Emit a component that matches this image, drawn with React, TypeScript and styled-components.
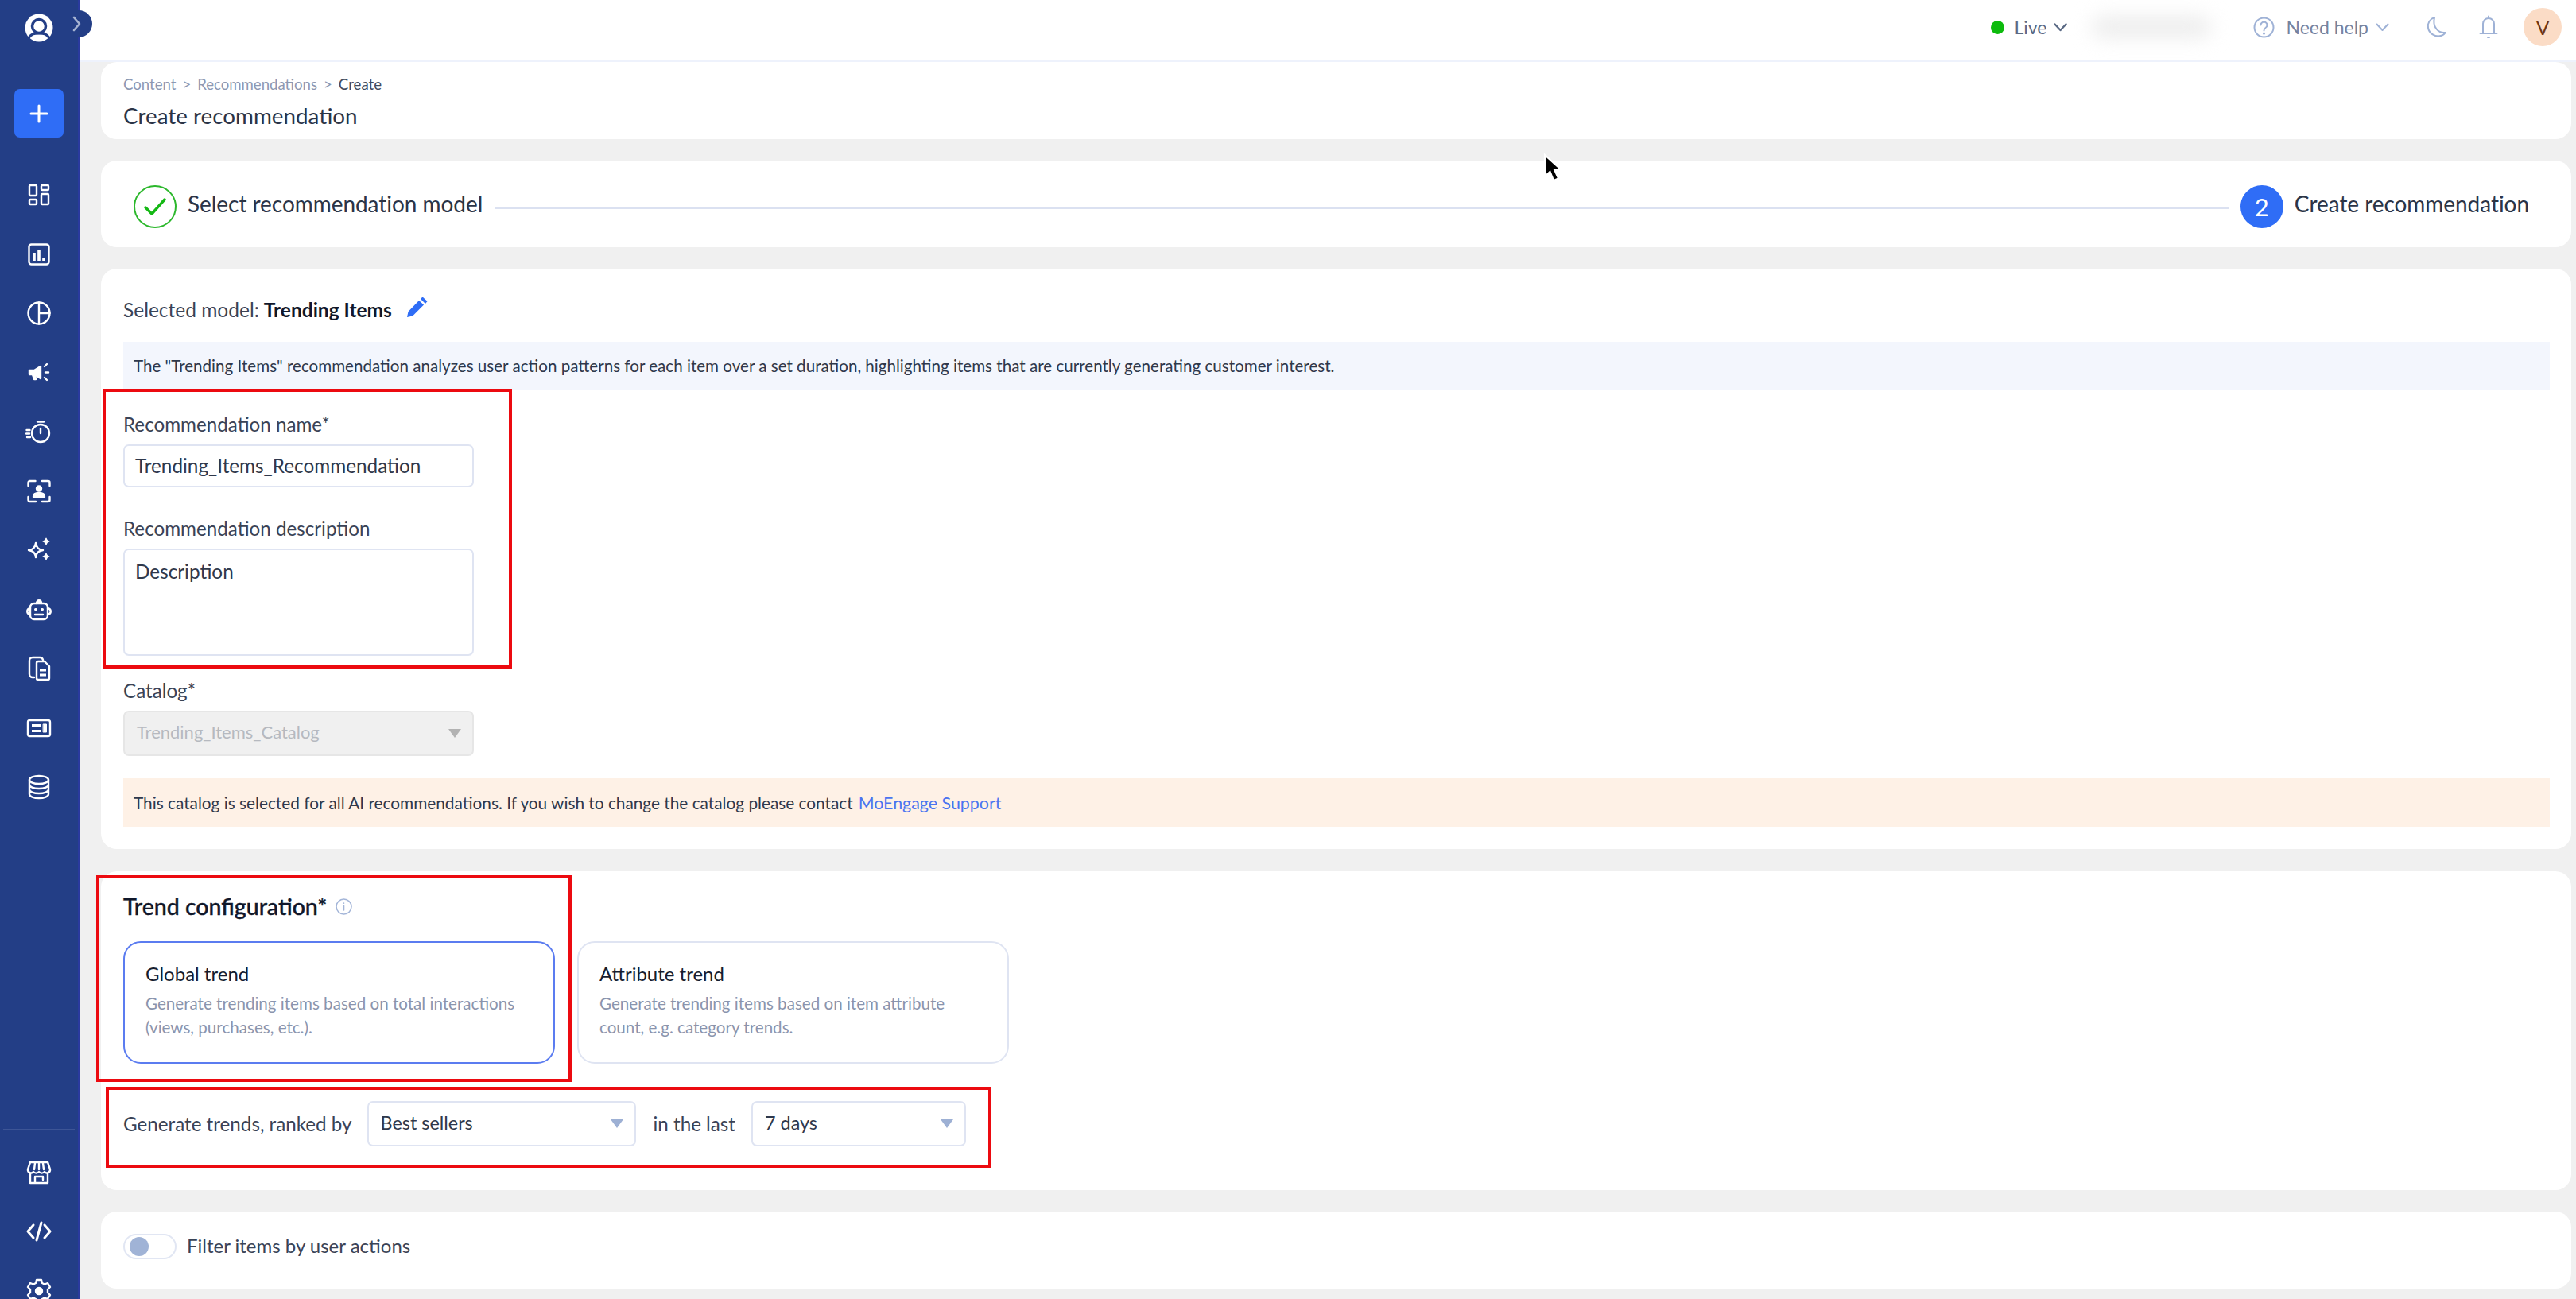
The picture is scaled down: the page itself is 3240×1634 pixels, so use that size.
import React from 'react';
import styled, { createGlobalStyle } from 'styled-components';

const GlobalStyle = createGlobalStyle`
  html, body {
    margin: 0;
    padding: 0;
    height: 100%;
    overflow: hidden;
    background: #f0f0f0;
    font-family: "Lato", "Liberation Sans", sans-serif;
    color: #2b3447;
  }
  * { box-sizing: border-box; }
`;

const Page = styled.div`
  display: flex;
  position: relative;
  width: 3240px;
  height: 1634px;
  overflow: hidden;
`;

const Sidebar = styled.aside`
  width: 100px;
  height: 100%;
  flex: none;
  background: #233e86;
  border-right: 2px solid #2a3a9e;
  display: flex;
  flex-direction: column;
  align-items: center;
  position: relative;
  padding-top: 9px;
  > svg { flex: none; }
`;

const CollapseTab = styled.div`
  position: absolute;
  left: 98px;
  top: 13px;
  width: 18px;
  height: 34px;
  background: #233e86;
  border-radius: 0 17px 17px 0;
  z-index: 5;
  display: flex;
  align-items: center;
  svg { margin-left: -8px; }
`;

const PlusButton = styled.div`
  width: 62px;
  height: 61px;
  flex: none;
  margin: 51px 0 35px;
  background: #2f6df6;
  border-radius: 7px;
  display: flex;
  align-items: center;
  justify-content: center;
`;

const NavItem = styled.div`
  height: 74.5px;
  width: 100%;
  flex: none;
  display: flex;
  align-items: center;
  justify-content: center;
`;

const SideDivider = styled.div`
  width: 90px;
  height: 2px;
  flex: none;
  background: #3d5596;
  margin: 392px 0 16px;
`;

const Main = styled.main`
  flex: 1;
  min-width: 0;
  display: flex;
  flex-direction: column;
`;

const TopBar = styled.header`
  height: 78px;
  flex: none;
  background: #fff;
  border-bottom: 2px solid #eef2fc;
  display: flex;
  align-items: center;
  justify-content: flex-end;
  padding: 0 18px 8px 0;
`;

const LiveDot = styled.span`
  width: 17px;
  height: 17px;
  border-radius: 50%;
  background: #0dbb0d;
  margin-right: 12px;
`;

const TopText = styled.span<{ $muted?: boolean }>`
  font-size: 23px;
  color: ${({ $muted }) => ($muted ? '#75839f' : '#5a6984')};
  margin: 0 9px 0 ${({ $muted }) => ($muted ? 14 : 0)}px;
`;

const BlurredAccount = styled.div`
  width: 206px;
  height: 54px;
  margin: 0 3px 0 25px;
  display: flex;
  align-items: center;
  justify-content: center;
  div {
    width: 150px;
    height: 26px;
    margin-right: 44px;
    background: #ececec;
    border-radius: 13px;
    filter: blur(12px);
  }
`;

const TopIcon = styled.span<{ $gap?: number }>`
  display: flex;
  margin-left: ${({ $gap }) => $gap ?? 0}px;
`;

const UserBadge = styled.div`
  width: 48px;
  height: 48px;
  margin-left: 32px;
  border-radius: 50%;
  background: #fbdcc6;
  color: #6e3410;
  font-size: 24px;
  display: flex;
  align-items: center;
  justify-content: center;
`;

const Content = styled.div`
  display: flex;
  flex-direction: column;
  gap: 27px;
  padding: 0 6px 0 27px;
`;

const Card = styled.section`
  background: #fff;
  border-radius: 20px;
`;

const HeaderCard = styled(Card)`
  height: 97px;
  padding: 16px 28px 0;
`;

const Breadcrumbs = styled.div`
  display: flex;
  height: 24px;
  align-items: center;
  font-size: 18.6px;
  color: #8d98b2;
  gap: 8px;
`;

const Crumb = styled.span<{ $current?: boolean }>`
  color: ${({ $current }) => ($current ? '#414a5e' : '#8d98b2')};
`;

const PageTitle = styled.h1`
  margin: 10px 0 0;
  font-size: 27.8px;
  line-height: 36px;
  font-weight: 400;
  color: #2b3447;
`;

const StepperCard = styled(Card)`
  height: 109px;
  padding: 31px 53px 0 41px;
  display: flex;
  align-items: flex-start;
`;

const StepCircle = styled.div<{ $done?: boolean }>`
  width: 54px;
  height: 54px;
  flex: none;
  border-radius: 50%;
  border: 2px solid ${({ $done }) => ($done ? '#2cb82c' : '#2f6df6')};
  background: ${({ $done }) => ($done ? '#fff' : '#2f6df6')};
  color: #fff;
  font-size: 31px;
  display: flex;
  align-items: center;
  justify-content: center;
`;

const StepLabel = styled.div`
  font-size: 28px;
  line-height: 46px;
  letter-spacing: -0.05px;
  margin-left: 14px;
  color: #2b3447;
  white-space: nowrap;
`;

const StepLine = styled.div`
  flex: 1;
  height: 2px;
  margin: 28px 15px 0;
  background: #dbe1f1;
`;

const FormCard = styled(Card)`
  height: 730px;
  padding: 26px 27px 0 28px;
`;

const SelectedRow = styled.div`
  height: 52px;
  display: flex;
  align-items: center;
  padding-bottom: 2px;
  font-size: 24.5px;
  color: #3a4356;
  b {
    font-weight: 700;
    color: #10172a;
    margin-left: 6px;
  }
  svg { margin: -6px 0 0 18px; }
`;

const Notice = styled.div<{ $warn?: boolean; $top: number }>`
  margin-top: ${({ $top }) => $top}px;
  height: ${({ $warn }) => ($warn ? 61 : 60)}px;
  padding-left: 13px;
  display: flex;
  align-items: center;
  font-size: ${({ $warn }) => ($warn ? 20.8 : 20.6)}px;
  white-space: pre;
  color: #2f384b;
  background: ${({ $warn }) => ($warn ? '#fef1e6' : '#f3f6fd')};
`;

const SupportLink = styled.a`
  color: #4a74f0;
  margin-left: 7px;
  font-size: 21.4px;
`;

const FieldLabel = styled.div<{ $top: number }>`
  margin-top: ${({ $top }) => $top}px;
  height: 30px;
  line-height: 30px;
  font-size: 24.2px;
  color: #3a4356;
`;

const TextBox = styled.div<{ $tall?: boolean }>`
  width: 441px;
  height: ${({ $tall }) => ($tall ? 135 : 54)}px;
  margin-top: 10px;
  border: 2px solid #dfe4f2;
  border-radius: 7px;
  padding: ${({ $tall }) => ($tall ? '12px 13px' : '0 13px')};
  display: flex;
  align-items: ${({ $tall }) => ($tall ? 'flex-start' : 'center')};
  font-size: 24.3px;
  line-height: 30px;
  color: #2f384b;
`;

const SelectBox = styled.div<{ $w: number; $disabled?: boolean; $top?: number }>`
  width: ${({ $w }) => $w}px;
  height: 57px;
  flex: none;
  margin-top: ${({ $top }) => $top ?? 0}px;
  padding: 0 14px 4px 15px;
  border: 2px solid ${({ $disabled }) => ($disabled ? '#e6e6e6' : '#dfe4f2')};
  border-radius: 7px;
  background: ${({ $disabled }) => ($disabled ? '#f0f0f0' : '#fff')};
  color: ${({ $disabled }) => ($disabled ? '#b6b9bf' : '#2f384b')};
  font-size: ${({ $disabled }) => ($disabled ? 22 : 23.4)}px;
  display: flex;
  align-items: center;
  justify-content: space-between;
`;

const Caret = styled.span<{ $disabled?: boolean }>`
  width: 0;
  height: 0;
  border-left: 8px solid transparent;
  border-right: 8px solid transparent;
  border-top: 11px solid ${({ $disabled }) => ($disabled ? '#b2b2b2' : '#9db0d4')};
  margin-top: 4px;
`;

const TrendCard = styled(Card)`
  height: 401px;
  padding: 26px 28px 0;
  margin-top: 1px;
`;

const TrendHeading = styled.h2`
  margin: 0;
  height: 36px;
  display: flex;
  align-items: center;
  gap: 11px;
  font-size: 28.5px;
  font-weight: 500;
  -webkit-text-stroke: 0.4px #10172a;
  color: #10172a;
`;

const TrendOptions = styled.div`
  display: flex;
  gap: 28px;
  margin-top: 26px;
`;

const TrendOption = styled.div<{ $active?: boolean }>`
  width: 543px;
  height: 154px;
  padding: 24px 26px 0 26px;
  border: 2px solid ${({ $active }) => ($active ? '#5b7cf0' : '#dfe4f2')};
  border-radius: 22px;
`;

const OptionTitle = styled.div`
  font-size: 24px;
  line-height: 30px;
  color: #161d30;
`;

const OptionText = styled.div`
  margin-top: 7px;
  font-size: 20.6px;
  line-height: 30px;
  color: #8a94ad;
`;

const RankRow = styled.div`
  display: flex;
  align-items: center;
  margin-top: 47px;
  font-size: 24.2px;
  color: #3a4356;
`;

const RankText = styled.span<{ $gapLeft: number; $gapRight: number }>`
  margin: 0 ${({ $gapRight }) => $gapRight}px 0 ${({ $gapLeft }) => $gapLeft}px;
`;

const FilterCard = styled(Card)`
  height: 97px;
  padding: 28px 28px 0;
  display: flex;
  align-items: flex-start;
`;

const Toggle = styled.div`
  width: 67px;
  height: 32px;
  border: 2px solid #e1e6f3;
  border-radius: 16px;
  padding: 2px 6px;
  span {
    display: block;
    width: 24px;
    height: 24px;
    border-radius: 50%;
    background: #a0b3d6;
  }
`;

const ToggleLabel = styled.span`
  margin-left: 13px;
  line-height: 30px;
  font-size: 24px;
  color: #3a4356;
`;

const Annotation = styled.div<{ $x: number; $y: number; $w: number; $h: number }>`
  position: absolute;
  left: ${({ $x }) => $x}px;
  top: ${({ $y }) => $y}px;
  width: ${({ $w }) => $w}px;
  height: ${({ $h }) => $h}px;
  border: 4px solid #ec0a10;
  pointer-events: none;
  z-index: 6;
`;

const Pointer = styled.svg`
  position: absolute;
  left: 1940px;
  top: 192px;
  z-index: 7;
`;

const W = { fill: 'none', stroke: '#fff', strokeWidth: 2.4, strokeLinecap: 'round', strokeLinejoin: 'round' } as const;

const SideIcon = ({ children }: { children: React.ReactNode }) => (
  <svg width="34" height="34" viewBox="0 0 34 34" {...W}>{children}</svg>
);

const navIcons: React.ReactNode[] = [
  <>
    <rect x="5" y="5" width="9" height="13" rx="1" />
    <rect x="20" y="5" width="9" height="6" rx="1" />
    <rect x="5" y="23" width="9" height="6" rx="1" />
    <rect x="20" y="16" width="9" height="13" rx="1" />
  </>,
  <>
    <rect x="4.5" y="4.5" width="25" height="25" rx="3" />
    <path d="M11 15v10M17 11v14M23 21v4" strokeWidth="3.6" strokeLinecap="butt" />
  </>,
  <>
    <circle cx="17" cy="17" r="13.5" />
    <path d="M17 3.5v27M17 17h13.5" />
  </>,
  <>
    <path d="M5 14h6l8-5v15l-8-5H5z" fill="#fff" />
    <path d="M9 19l2 6h2l-1-6" fill="#fff" />
    <path d="M24 9l3-3M25 16.5h4M24 23l3 3" />
  </>,
  <>
    <circle cx="19" cy="19" r="11" />
    <path d="M15 4.5h8M19 13v6M1.5 15h4M1 19.5h4M2 24h4" />
  </>,
  <>
    <path d="M3.5 10V6a2 2 0 0 1 2-2h7M21 4h7.5a2 2 0 0 1 2 2v4M30.5 24v4a2 2 0 0 1-2 2H21M13 30H5.5a2 2 0 0 1-2-2v-4" />
    <circle cx="17" cy="13.5" r="3" fill="#fff" />
    <path d="M10 24c0-3.5 3-5 7-5s7 1.500 7 5z" fill="#fff" />
  </>,
  <>
    <path d="M13 8c1 6 3 8 9 9-6 1-8 3-9 9-1-6-3-8-9-9 6-1 8-3 9-9z" />
    <path d="M26 2c.5 2.500 1.500 3.500 4 4-2.500.5-3.500 1.500-4 4-.5-2.500-1.500-3.500-4-4 2.500-.5 3.500-1.500 4-4zM26 21c.5 2.500 1.500 3.500 4 4-2.500.5-3.500 1.500-4 4-.5-2.500-1.500-3.500-4-4 2.500-.5 3.500-1.500 4-4z" fill="#fff" strokeWidth="1.200" />
  </>,
  <>
    <rect x="6" y="9" width="22" height="20" rx="5" />
    <path d="M14 9c0-5 6-5 6 0" fill="#fff" />
    <path d="M6 15c-5 1-5 7 0 8M28 15c5 1 5 7 0 8M12 23h10" />
    <path d="M12.500 16.500h1M20.500 16.500h1" strokeWidth="3" />
  </>,
  <>
    <path d="M11 28H9a4 4 0 0 1-4-4V7a4 4 0 0 1 4-4h9a4 4 0 0 1 4 3" />
    <path d="M14 10a2 2 0 0 1 2-2h8l6 6v15a2 2 0 0 1-2 2H16a2 2 0 0 1-2-2z" />
    <path d="M18 19h8M18 25h8" strokeWidth="3" strokeLinecap="butt" />
  </>,
  <>
    <rect x="3" y="7" width="28" height="20" rx="2.500" />
    <path d="M8 13.500h11M8 20.500h11" strokeWidth="3" strokeLinecap="butt" />
    <rect x="22.500" y="12" width="4" height="10" fill="#fff" strokeWidth="1" />
  </>,
  <>
    <ellipse cx="17" cy="8" rx="12" ry="5" />
    <path d="M5 8v18c0 2.800 5.400 5 12 5s12-2.200 12-5V8M5 14c0 2.800 5.400 5 12 5s12-2.200 12-5M5 20c0 2.800 5.400 5 12 5s12-2.200 12-5" />
  </>,
];

const footIcons: React.ReactNode[] = [
  <>
    <path d="M6 4h22l3 9a4 4 0 0 1-7 3 5 5 0 0 1-7 0 5 5 0 0 1-7 0 4 4 0 0 1-7-3z" />
    <path d="M12 5l-1 8M17 5v8M22 5l1 8" />
    <path d="M6 18v12h22V18M12 30v-8h10v4" />
  </>,
  <>
    <path d="M10 9l-7 8 7 8M24 9l7 8-7 8M20 6l-6 22" strokeWidth="3" />
  </>,
  <>
    <path d="M14 3h6l1 4 3 1.500 4-1.500 3 5-3 3v4l3 3-3 5-4-1.500-3 1.500-1 4h-6l-1-4-3-1.500-4 1.500-3-5 3-3v-4l-3-3 3-5 4 1.500 3-1.500z" />
    <circle cx="17" cy="17" r="4" fill="#fff" />
  </>,
];

const Chevron = ({ color, width = 2.4 }: { color: string; width?: number }) => (
  <svg width="17" height="11" viewBox="0 0 17 11" fill="none" stroke={color} strokeWidth={width} strokeLinecap="round" strokeLinejoin="round">
    <path d="M1.500 1.500L8.500 9l7-7.500" />
  </svg>
);

const TrendChoice = ({ title, lines, active }: { title: string; lines: string[]; active?: boolean }) => (
  <TrendOption $active={active}>
    <OptionTitle>{title}</OptionTitle>
    <OptionText>
      {lines[0]}
      <br />
      {lines[1]}
    </OptionText>
  </TrendOption>
);

export default function App() {
  return (
    <>
      <GlobalStyle />
      <Page>
        <Sidebar>
          <CollapseTab>
            <svg width="14" height="22" viewBox="0 0 14 22" fill="none" stroke="#a7b4d2" strokeWidth="2.600" strokeLinecap="round" strokeLinejoin="round">
              <path d="M3 3l7 8-7 8" />
            </svg>
          </CollapseTab>
          <svg width="36" height="52" viewBox="0 0 36 52">
            <circle cx="18" cy="26" r="17.500" fill="#fff" />
            <circle cx="18" cy="24" r="8.500" fill="none" stroke="#233e86" strokeWidth="3.500" />
            <path d="M5 39c3-6 8-6 13-6s10 0 13 6" fill="none" stroke="#233e86" strokeWidth="3" />
          </svg>
          <PlusButton>
            <svg width="24" height="24" viewBox="0 0 24 24" fill="none" stroke="#fff" strokeWidth="3" strokeLinecap="round">
              <path d="M12 2v20M2 12h20" />
            </svg>
          </PlusButton>
          {navIcons.map((icon, i) => (
            <NavItem key={i}>
              <SideIcon>{icon}</SideIcon>
            </NavItem>
          ))}
          <SideDivider />
          {footIcons.map((icon, i) => (
            <NavItem key={i}>
              <SideIcon>{icon}</SideIcon>
            </NavItem>
          ))}
        </Sidebar>

        <Main>
          <TopBar>
            <LiveDot />
            <TopText>Live</TopText>
            <Chevron color="#5a6984" />
            <BlurredAccount>
              <div />
            </BlurredAccount>
            <TopIcon>
              <svg width="27" height="27" viewBox="0 0 27 27" fill="none" stroke="#9fb2d6" strokeWidth="2" strokeLinecap="round">
                <circle cx="13.500" cy="13.500" r="12" />
                <path d="M9.500 10.500a4 4 0 1 1 6 3.500c-1.500 1-2 1.500-2 3.500" />
                <circle cx="13.500" cy="21" r=".6" />
              </svg>
            </TopIcon>
            <TopText $muted>Need help</TopText>
            <Chevron color="#9fb2d6" width={2} />
            <TopIcon $gap={46}>
              <svg width="26" height="28" viewBox="0 0 26 28" fill="none" stroke="#9fb2d6" strokeWidth="2" strokeLinejoin="round">
                <path d="M11 2C5 4 2 9 3 15c1 7 9 12 16 10 2.500-.7 4.500-2 5.500-4C16 22 8 14 11 2z" />
              </svg>
            </TopIcon>
            <TopIcon $gap={41}>
              <svg width="24" height="30" viewBox="0 0 24 30" fill="none" stroke="#9fb2d6" strokeWidth="2" strokeLinecap="round" strokeLinejoin="round">
                <path d="M12 1.500v2M5 23V11a7 7 0 0 1 14 0v12M1.500 23h21M11 28h2" />
              </svg>
            </TopIcon>
            <UserBadge>V</UserBadge>
          </TopBar>

          <Content>
            <HeaderCard>
              <Breadcrumbs>
                <Crumb>Content</Crumb>
                <span>&gt;</span>
                <Crumb>Recommendations</Crumb>
                <span>&gt;</span>
                <Crumb $current>Create</Crumb>
              </Breadcrumbs>
              <PageTitle>Create recommendation</PageTitle>
            </HeaderCard>

            <StepperCard>
              <StepCircle $done>
                <svg width="30" height="24" viewBox="0 0 30 24" fill="none" stroke="#14b814" strokeWidth="3.400" strokeLinecap="round" strokeLinejoin="round">
                  <path d="M3 13l8 8L27 3" />
                </svg>
              </StepCircle>
              <StepLabel>Select recommendation model</StepLabel>
              <StepLine />
              <StepCircle>2</StepCircle>
              <StepLabel>Create recommendation</StepLabel>
            </StepperCard>

            <FormCard>
              <SelectedRow>
                Selected model: <b>Trending Items</b>
                <svg width="27" height="27" viewBox="0 0 27 27" fill="#2f6df6">
                  <path d="M1 26l1.500-7L16 5l6 5.500L8 24.500zM18 3l2.500-2.500 6 5.500-2.500 3z" />
                </svg>
              </SelectedRow>
              <Notice $top={14}>The "Trending Items" recommendation analyzes user action patterns for each item over a set duration, highlighting items that are currently generating customer interest.</Notice>
              <FieldLabel $top={29}>Recommendation name*</FieldLabel>
              <TextBox>Trending_Items_Recommendation</TextBox>
              <FieldLabel $top={37}>Recommendation description</FieldLabel>
              <TextBox $tall>Description</TextBox>
              <FieldLabel $top={29}>Catalog*</FieldLabel>
              <SelectBox $w={441} $disabled $top={10}>
                Trending_Items_Catalog
                <Caret $disabled />
              </SelectBox>
              <Notice $warn $top={28}>
                This catalog is selected for all AI recommendations. If you wish to change the catalog please contact
                <SupportLink>MoEngage Support</SupportLink>
              </Notice>
            </FormCard>

            <TrendCard>
              <TrendHeading>
                Trend configuration*
                <svg width="21" height="21" viewBox="0 0 21 21" fill="none" stroke="#a3b5d8" strokeWidth="1.600" strokeLinecap="round">
                  <circle cx="10.500" cy="10.500" r="9.500" />
                  <path d="M10.500 9.500v5.500M10.500 6v.3" />
                </svg>
              </TrendHeading>
              <TrendOptions>
                <TrendChoice active title="Global trend" lines={['Generate trending items based on total interactions', '(views, purchases, etc.).']} />
                <TrendChoice title="Attribute trend" lines={['Generate trending items based on item attribute', 'count, e.g. category trends.']} />
              </TrendOptions>
              <RankRow>
                <RankText $gapLeft={0} $gapRight={19}>Generate trends, ranked by</RankText>
                <SelectBox $w={338}>
                  Best sellers
                  <Caret />
                </SelectBox>
                <RankText $gapLeft={22} $gapRight={20}>in the last</RankText>
                <SelectBox $w={270}>
                  7 days
                  <Caret />
                </SelectBox>
              </RankRow>
            </TrendCard>

            <FilterCard>
              <Toggle>
                <span />
              </Toggle>
              <ToggleLabel>Filter items by user actions</ToggleLabel>
            </FilterCard>
          </Content>
        </Main>

        <Annotation $x={129} $y={489} $w={515} $h={352} />
        <Annotation $x={121} $y={1101} $w={598} $h={260} />
        <Annotation $x={133} $y={1367} $w={1114} $h={102} />
        <Pointer width="28" height="40" viewBox="0 0 28 40">
          <path d="M3 3v27l6.500-6 4.500 11 6-2.600-4.600-10.400H24z" fill="#000" stroke="#fff" strokeWidth="2.200" />
        </Pointer>
      </Page>
    </>
  );
}
